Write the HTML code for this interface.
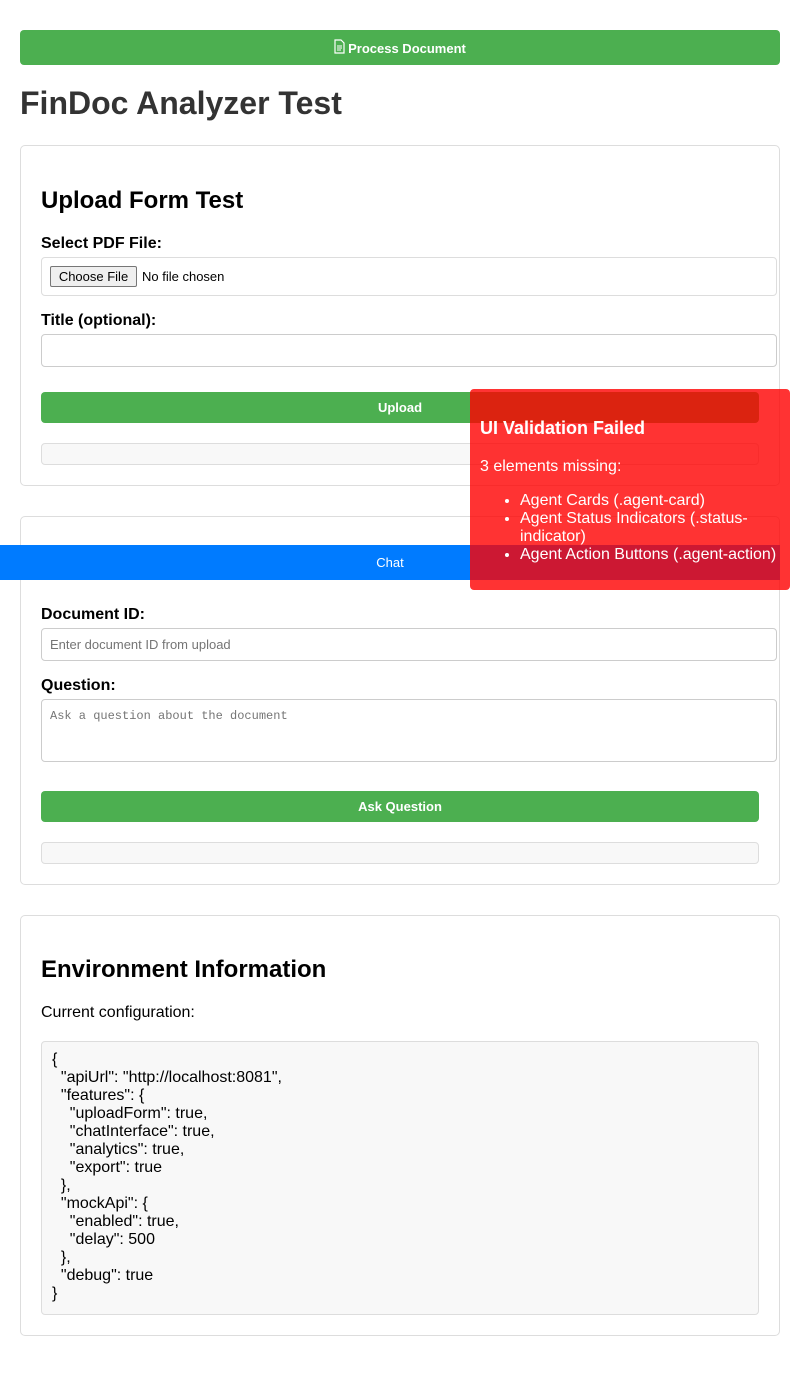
<!DOCTYPE html>
<html><head><meta charset="utf-8"><style>
*{box-sizing:border-box;margin:0;padding:0}
body{width:800px;height:1386px;background:#fff;font-family:"Liberation Sans",Arial,sans-serif;position:relative;overflow:hidden;color:#000}
.a{position:absolute}
.btn{background:#4CAF50;color:#fff;border-radius:4px;font-size:13px;font-weight:bold;text-align:center}
.card{border:1px solid #ddd;border-radius:5px;left:20px;width:760px}
h2{position:absolute;font-size:24px;font-weight:bold;left:41px}
.lbl{position:absolute;left:41px;font-size:16px;font-weight:bold}
.inp{position:absolute;left:41px;width:736px;border:1px solid #ccc;border-radius:4px;background:#fff}
.res{position:absolute;left:41px;width:718px;height:22px;background:#f8f8f8;border:1px solid #ddd;border-radius:4px}
</style></head><body>
<div class="a btn" style="left:20px;top:30px;width:760px;height:35px;line-height:37px">
<svg width="11" height="15" viewBox="0 0 11 15" style="vertical-align:-1px;margin-right:3px"><path d="M1 1h6l3 3v10H1z" fill="none" stroke="#fff" stroke-width="1.2"/><path d="M3 7h5M3 9h5M3 11h4" stroke="#fff" stroke-width="1"/></svg>Process Document</div>
<div class="a" style="left:20px;top:85px;font-size:32px;font-weight:bold;color:#333">FinDoc Analyzer Test</div>

<div class="a card" style="top:145px;height:341px"></div>
<h2 style="top:187px">Upload Form Test</h2>
<div class="lbl" style="top:235px">Select PDF File:</div>
<div class="inp" style="top:257px;height:39px;border-color:#ddd"></div>
<div class="a" style="left:50px;top:266px;width:87px;height:21px;border:1px solid #767676;border-radius:2px;background:#efefef;font-size:13px;line-height:19px;text-align:center">Choose File</div>
<div class="a" style="left:142px;top:269px;font-size:13px">No file chosen</div>
<div class="lbl" style="top:312px">Title (optional):</div>
<div class="inp" style="top:334px;height:33px"></div>
<div class="a btn" style="left:41px;top:392px;width:718px;height:31px;line-height:31px">Upload</div>
<div class="res" style="top:443px"></div>

<div class="a card" style="top:516px;height:369px"></div>
<div class="a" style="left:0;top:545px;width:780px;height:35px;background:#007bff;color:#fff;font-size:13px;line-height:35px;text-align:center">Chat</div>
<div class="lbl" style="top:606px">Document ID:</div>
<div class="inp" style="top:628px;height:33px;font-size:13px;color:#757575;padding:8px 0 0 8px">Enter document ID from upload</div>
<div class="lbl" style="top:677px">Question:</div>
<div class="inp" style="top:699px;height:63px;font-family:'Liberation Mono',monospace;font-size:12px;color:#757575;padding:9px 0 0 8px">Ask a question about the document</div>
<div class="a btn" style="left:41px;top:791px;width:718px;height:31px;line-height:31px">Ask Question</div>
<div class="res" style="top:842px"></div>

<div class="a card" style="top:915px;height:421px"></div>
<h2 style="top:956px">Environment Information</h2>
<div class="a" style="left:41px;top:1004px;font-size:16px">Current configuration:</div>
<pre class="a" style="left:41px;top:1041px;width:718px;height:274px;background:#f8f8f8;border:1px solid #ddd;border-radius:4px;font-family:'Liberation Sans',Arial,sans-serif;font-size:16px;line-height:18px;padding:9px 10px">{
  "apiUrl": "http://localhost:8081",
  "features": {
    "uploadForm": true,
    "chatInterface": true,
    "analytics": true,
    "export": true
  },
  "mockApi": {
    "enabled": true,
    "delay": 500
  },
  "debug": true
}</pre>

<div class="a" style="left:470px;top:389px;width:320px;height:201px;background:rgba(255,0,0,0.8);border-radius:4px;color:#fff">
<div class="a" style="left:10px;top:29px;font-size:18px;font-weight:bold">UI Validation Failed</div>
<div class="a" style="left:10px;top:69px;font-size:16px">3 elements missing:</div>
<ul class="a" style="left:50px;top:103px;font-size:16px;line-height:18px;width:270px">
<li>Agent Cards (.agent-card)</li>
<li>Agent Status Indicators (.status-indicator)</li>
<li style="white-space:nowrap">Agent Action Buttons (.agent-action)</li>
</ul>
</div>
</body></html>
